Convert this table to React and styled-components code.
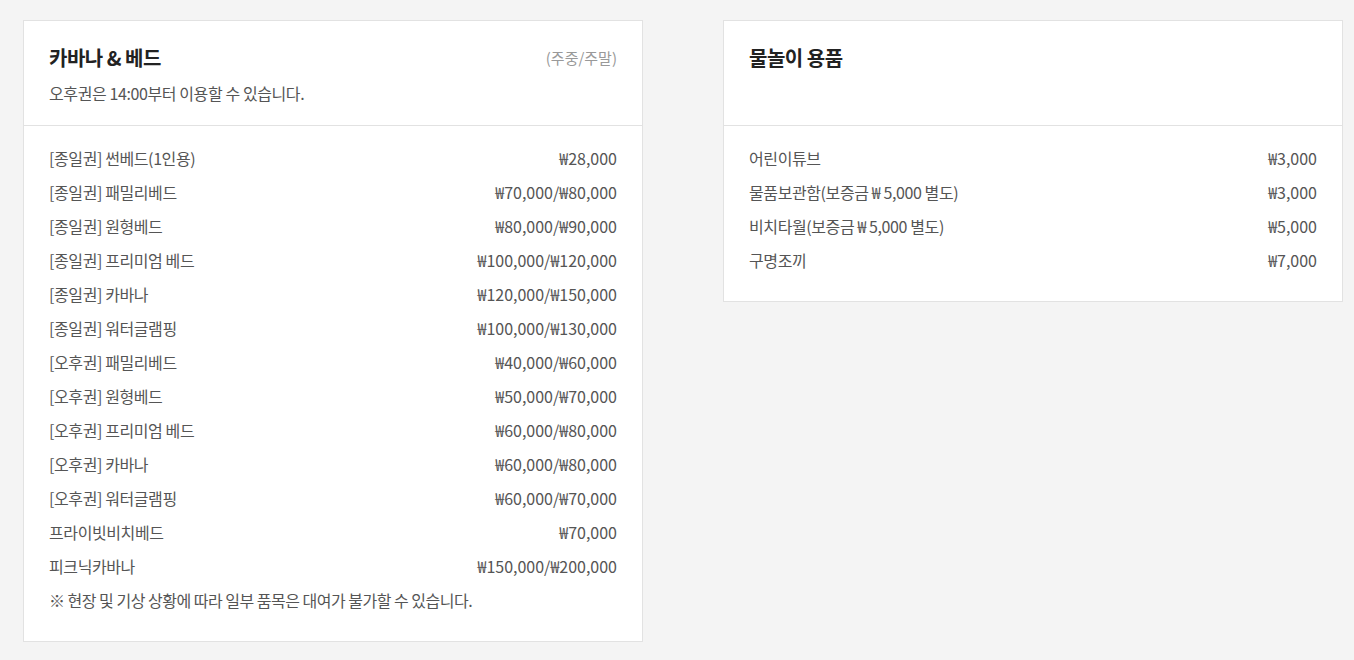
import React from "react";
import styled, { createGlobalStyle } from "styled-components";

const Global = createGlobalStyle`
  html, body { margin: 0; padding: 0; background: #f4f4f4; }
  body { font-family: "Noto Sans CJK KR", "Noto Sans", sans-serif; }
  * { box-sizing: border-box; }
`;

const Page = styled.div`
  display: flex;
  align-items: flex-start;
  gap: 80px;
  padding: 20px 0 0 23px;
  min-height: 660px;
`;

const Card = styled.section`
  width: 620px;
  background: #fff;
  border: 1px solid #e2e2e2;
`;

const Header = styled.header`
  height: 105px;
  padding: 22px 25px 0 25px;
  border-bottom: 1px solid #e2e2e2;
`;

const TitleRow = styled.div`
  display: flex;
  justify-content: space-between;
  align-items: center;
  height: 28px;
`;

const Title = styled.h2`
  margin: 0;
  font-size: 20px;
  font-weight: 700;
  color: #222;
  letter-spacing: -0.5px;
`;

const Label = styled.span`
  font-size: 15px;
  color: #999;
`;

const Sub = styled.p`
  margin: 11px 0 0;
  font-size: 16px;
  line-height: 22px;
  color: #555;
  letter-spacing: -0.4px;
`;

const Body = styled.div`
  padding: 15px 25px 24px;
`;

const Row = styled.div`
  display: flex;
  justify-content: space-between;
  align-items: center;
  height: 34px;
  font-size: 16px;
  color: #555;
`;

const Name = styled.span`
  letter-spacing: -0.4px;
`;

const Price = styled.span`
  letter-spacing: 0;
`;

const Note = styled.p`
  margin: 0;
  height: 34px;
  line-height: 34px;
  font-size: 16px;
  color: #555;
  letter-spacing: -0.5px;
`;

const bedItems = [
  ["[종일권] 썬베드(1인용)", "₩28,000"],
  ["[종일권] 패밀리베드", "₩70,000/₩80,000"],
  ["[종일권] 원형베드", "₩80,000/₩90,000"],
  ["[종일권] 프리미엄 베드", "₩100,000/₩120,000"],
  ["[종일권] 카바나", "₩120,000/₩150,000"],
  ["[종일권] 워터글램핑", "₩100,000/₩130,000"],
  ["[오후권] 패밀리베드", "₩40,000/₩60,000"],
  ["[오후권] 원형베드", "₩50,000/₩70,000"],
  ["[오후권] 프리미엄 베드", "₩60,000/₩80,000"],
  ["[오후권] 카바나", "₩60,000/₩80,000"],
  ["[오후권] 워터글램핑", "₩60,000/₩70,000"],
  ["프라이빗비치베드", "₩70,000"],
  ["피크닉카바나", "₩150,000/₩200,000"],
];

const waterItems = [
  ["어린이튜브", "₩3,000"],
  ["물품보관함(보증금 ₩ 5,000 별도)", "₩3,000"],
  ["비치타월(보증금 ₩ 5,000 별도)", "₩5,000"],
  ["구명조끼", "₩7,000"],
];

export default function App() {
  return (
    <>
      <Global />
      <Page>
        <Card>
          <Header>
            <TitleRow>
              <Title>카바나 &amp; 베드</Title>
              <Label>(주중/주말)</Label>
            </TitleRow>
            <Sub>오후권은 14:00부터 이용할 수 있습니다.</Sub>
          </Header>
          <Body>
            {bedItems.map(([n, p]) => (
              <Row key={n}>
                <Name>{n}</Name>
                <Price>{p}</Price>
              </Row>
            ))}
            <Note>※ 현장 및 기상 상황에 따라 일부 품목은 대여가 불가할 수 있습니다.</Note>
          </Body>
        </Card>
        <Card>
          <Header>
            <TitleRow>
              <Title>물놀이 용품</Title>
            </TitleRow>
          </Header>
          <Body>
            {waterItems.map(([n, p]) => (
              <Row key={n}>
                <Name>{n}</Name>
                <Price>{p}</Price>
              </Row>
            ))}
          </Body>
        </Card>
      </Page>
    </>
  );
}
